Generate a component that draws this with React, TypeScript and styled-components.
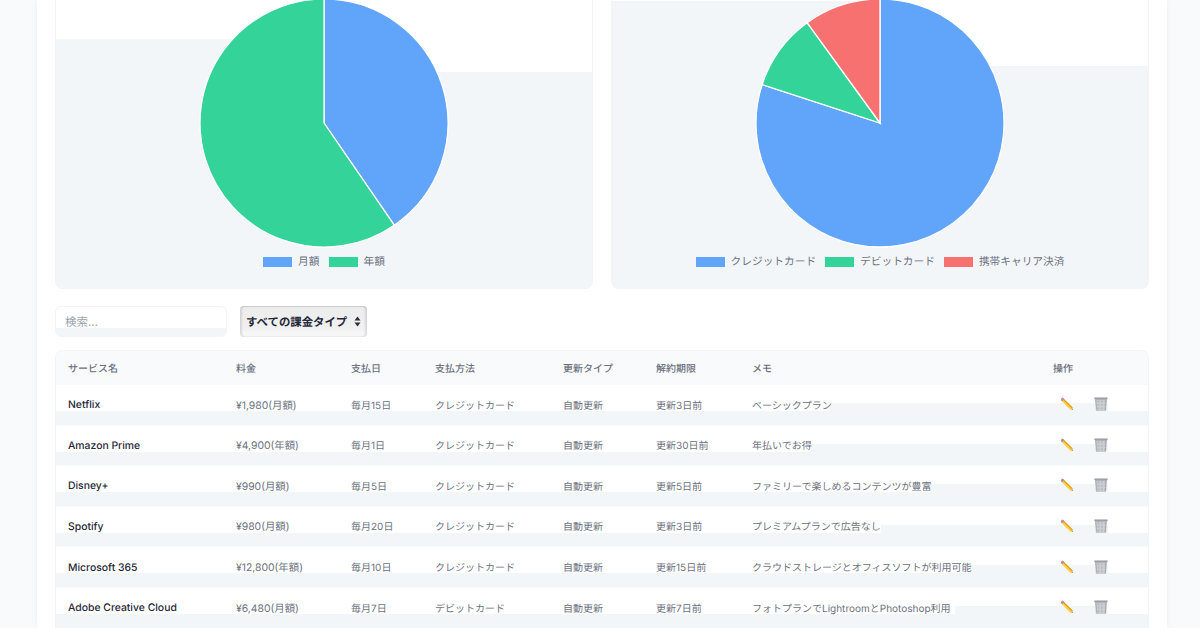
import React from 'react'
import styled, { createGlobalStyle } from 'styled-components'

const white = 'linear-gradient(#fff, #fff)'

const Global = createGlobalStyle`
    html, body {
        margin: 0;
        padding: 0;
        height: 628px;
        overflow: hidden;
        background: #f9fafb;
        font-family: Inter, "Noto Sans CJK JP", sans-serif;
        text-rendering: geometricPrecision;
    }
`

const Page = styled.div`
    height: 628px;
    padding-left: 37px;
    overflow: hidden;
`

const Main = styled.main`
    box-sizing: border-box;
    width: 1130px;
    height: 628px;
    padding: 0 18px;
    background: #fff;
    box-shadow: 0 0 6px rgba(0, 0, 0, 0.06);
    overflow: hidden;
`

const Charts = styled.section`
    display: grid;
    grid-template-columns: 538px 538px;
    gap: 18px;
`

const ChartCard = styled.div<{ $left: number; $right: number }>`
    box-sizing: border-box;
    height: 289px;
    display: flex;
    flex-direction: column;
    align-items: center;
    border: 1px solid #f3f4f6;
    border-top: none;
    border-radius: 0 0 8px 8px;
    background:
        ${white} 0 0 / 50% ${p => p.$left}px no-repeat,
        ${white} 100% 0 / 50% ${p => p.$right}px no-repeat,
        #f3f6f9;
`

const PieSvg = styled.svg`
    display: block;
    flex: none;
    width: 252px;
    height: 252px;
    margin-top: -3px;
`

const Legend = styled.div`
    display: flex;
    align-items: center;
    gap: 9px;
    margin-top: 7px;
    height: 12px;
`

const LegendItem = styled.div`
    display: flex;
    align-items: center;
    gap: 6px;
    font-size: 10.7px;
    line-height: 12px;
    color: #6b7280;
`

const Swatch = styled.span<{ $color: string }>`
    width: 29px;
    height: 10px;
    background: ${p => p.$color};
`

const Toolbar = styled.div`
    display: flex;
    gap: 13px;
    margin-top: 17px;
`

const SearchBox = styled.div`
    box-sizing: border-box;
    width: 172px;
    height: 31px;
    padding: 9px 9px 0;
    border: 1px solid #f3f4f6;
    border-radius: 6px;
    font-size: 11.5px;
    line-height: 13px;
    color: #9ca3af;
    background: ${white} 0 0 / 100% 21px no-repeat, #f3f6f9;
`

const SelectBox = styled.div`
    box-sizing: border-box;
    width: 127px;
    height: 31px;
    padding-left: 6px;
    display: flex;
    align-items: center;
    gap: 7px;
    border-radius: 4px;
    font-size: 11.4px;
    font-weight: 700;
    color: #1f2937;
    background: linear-gradient(#ececec, #f0f0f0 70%, #fafafa);
    box-shadow: inset 2px 0 2px rgba(0, 0, 0, 0.1), inset -2px 0 2px rgba(0, 0, 0, 0.1), inset 0 1px 1px rgba(0, 0, 0, 0.08);
`

const TableCard = styled.div`
    margin-top: 13px;
    border: 1px solid #f3f4f6;
    border-bottom: none;
    border-radius: 8px 8px 0 0;
    overflow: hidden;
`

const columns = '168px 115px 84px 128px 93px 96px 301px 1fr'

const HeaderRow = styled.div`
    box-sizing: border-box;
    display: grid;
    grid-template-columns: ${columns};
    align-items: center;
    height: 34px;
    padding: 0 0 1.5px 12px;
    background: #f9fafb;
    font-size: 10px;
    font-weight: 500;
    color: #6b7280;
`

// the white band drops lower up to the end of the memo text and right of the trash icon
const Row = styled.div<{ $split: number }>`
    box-sizing: border-box;
    display: grid;
    grid-template-columns: ${columns};
    align-items: center;
    height: 40.6px;
    padding-left: 12px;
    border-bottom: 1.4px solid #fafbfc;
    font-size: 10px;
    color: #6b7280;
    background:
        ${white} 0 0 / ${p => p.$split}px 26.2px no-repeat,
        ${white} 100% 0 / 40px 26.2px no-repeat,
        ${white} 0 0 / 100% 18px no-repeat,
        #f3f6f9;
`

const NameCell = styled.div`
    font-size: 10.4px;
    font-weight: 500;
    color: #1f2937;
`

const HeadCell = styled.div`
    white-space: nowrap;
`

const Cell = styled.div`
    margin-top: -1.5px;
    white-space: nowrap;
`

const PriceCell = styled(Cell)`
    font-size: 10.4px;
`

const Actions = styled.div`
    display: flex;
    align-items: center;
    gap: 20px;
    margin-top: -1px;
    padding-left: 7px;
`

const polar = (cx: number, cy: number, r: number, deg: number) => {
    const a = (deg * Math.PI) / 180
    return [cx + r * Math.sin(a), cy - r * Math.cos(a)]
}

type Slice = { color: string; from: number; to: number }

const Pie = ({ slices }: { slices: Slice[] }) => (
    <PieSvg viewBox="0 0 252 252">
        {slices.map(s => {
            const [x1, y1] = polar(126, 126, 124, s.from)
            const [x2, y2] = polar(126, 126, 124, s.to)
            const large = s.to - s.from > 180 ? 1 : 0
            return (
                <path
                    key={s.from}
                    d={`M126 126L${x1} ${y1}A124 124 0 ${large} 1 ${x2} ${y2}Z`}
                    fill={s.color}
                    stroke="#fff"
                    strokeWidth={1.3}
                />
            )
        })}
    </PieSvg>
)

const SelectArrows = () => (
    <svg width="7" height="11" viewBox="0 0 7 11">
        <path d="M3.5 0.5L6.5 4.5H0.5Z M3.5 10.5L0.5 6.5H6.5Z" fill="#27303f" />
    </svg>
)

const PencilIcon = () => (
    <svg width="14" height="14" viewBox="0 0 15 15">
        <path d="M3.6 1.6L13.4 11.2L14 14L11.2 13.4L1.6 3.8Z" fill="#f4b81c" />
        <path d="M2.6 2.7L12.4 12.3L11.2 13.4L1.6 3.8Z" fill="#fbd24a" />
        <path d="M3.6 1.6L13.4 11.2L12.9 11.8L3.1 2.1Z" fill="#d98a12" />
        <path d="M2 0.9C2.6 0.5 3.2 0.6 3.6 1.2L4.2 1.9L2 4.2L1.3 3.5C0.8 3 0.7 2.4 1.1 1.9Z" fill="#e8808a" />
        <path d="M3.7 1.4L4.7 2.4L2.5 4.6L1.5 3.6Z" fill="#9aa0a8" />
        <path d="M12.3 12.4L13.4 11.2L14 14L11.2 13.4Z" fill="#e8c9a0" />
        <path d="M13.4 13.1L14 14L13 13.8Z" fill="#4b4b4b" />
    </svg>
)

const TrashIcon = () => (
    <svg width="14" height="14" viewBox="0 0 14 14">
        <defs>
            <pattern id="mesh" width="1.4" height="1.4" patternUnits="userSpaceOnUse">
                <rect width="1.4" height="1.4" fill="#cdd0d3" />
                <rect width="0.7" height="0.7" fill="#aeb2b6" />
            </pattern>
        </defs>
        <path d="M0.8 1.4H13.2L12.1 13.2C12 13.7 11.7 14 11.2 14H2.8C2.3 14 2 13.7 1.9 13.2Z" fill="url(#mesh)" />
        <path d="M0.8 1.4H13.2L13 2.8H1Z" fill="#a6aaae" />
        <rect x="0.2" y="0.4" width="13.6" height="1.3" rx="0.6" fill="#90959a" />
        <path d="M2 2.8L2.8 13.6M12 2.8L11.2 13.6" stroke="#989ca1" strokeWidth="0.6" fill="none" />
    </svg>
)

type Subscription = {
    name: string
    price: string
    day: string
    method: string
    limit: string
    memo: string
    split: number
}

const subscriptions: Subscription[] = [
    { name: 'Netflix', price: '¥1,980(月額)', day: '毎月15日', method: 'クレジットカード', limit: '更新3日前', memo: 'ベーシックプラン', split: 774 },
    { name: 'Amazon Prime', price: '¥4,900(年額)', day: '毎月1日', method: 'クレジットカード', limit: '更新30日前', memo: '年払いでお得', split: 755 },
    { name: 'Disney+', price: '¥990(月額)', day: '毎月5日', method: 'クレジットカード', limit: '更新5日前', memo: 'ファミリーで楽しめるコンテンツが豊富', split: 874 },
    { name: 'Spotify', price: '¥980(月額)', day: '毎月20日', method: 'クレジットカード', limit: '更新3日前', memo: 'プレミアムプランで広告なし', split: 825 },
    { name: 'Microsoft 365', price: '¥12,800(年額)', day: '毎月10日', method: 'クレジットカード', limit: '更新15日前', memo: 'クラウドストレージとオフィスソフトが利用可能', split: 914 },
    { name: 'Adobe Creative Cloud', price: '¥6,480(月額)', day: '毎月7日', method: 'デビットカード', limit: '更新7日前', memo: 'フォトプランでLightroomとPhotoshop利用', split: 899 }
]

const headers = ['サービス名', '料金', '支払日', '支払方法', '更新タイプ', '解約期限', 'メモ', '操作']

export default function App() {
    return (
        <Page>
            <Global />
            <Main>
                <Charts>
                    <ChartCard $left={39} $right={72}>
                        <Pie
                            slices={[
                                { color: '#60a5fa', from: 0, to: 145.5 },
                                { color: '#34d399', from: 145.5, to: 360 }
                            ]}
                        />
                        <Legend>
                            <LegendItem><Swatch $color="#60a5fa" />月額</LegendItem>
                            <LegendItem><Swatch $color="#34d399" />年額</LegendItem>
                        </Legend>
                    </ChartCard>
                    <ChartCard $left={1} $right={66}>
                        <Pie
                            slices={[
                                { color: '#60a5fa', from: 0, to: 288 },
                                { color: '#34d399', from: 288, to: 324 },
                                { color: '#f87171', from: 324, to: 360 }
                            ]}
                        />
                        <Legend>
                            <LegendItem><Swatch $color="#60a5fa" />クレジットカード</LegendItem>
                            <LegendItem><Swatch $color="#34d399" />デビットカード</LegendItem>
                            <LegendItem><Swatch $color="#f87171" />携帯キャリア決済</LegendItem>
                        </Legend>
                    </ChartCard>
                </Charts>
                <Toolbar>
                    <SearchBox>検索...</SearchBox>
                    <SelectBox>すべての課金タイプ<SelectArrows /></SelectBox>
                </Toolbar>
                <TableCard>
                    <HeaderRow>
                        {headers.map(h => <HeadCell key={h}>{h}</HeadCell>)}
                    </HeaderRow>
                    {subscriptions.map(s => (
                        <Row key={s.name} $split={s.split}>
                            <NameCell>{s.name}</NameCell>
                            <PriceCell>{s.price}</PriceCell>
                            <Cell>{s.day}</Cell>
                            <Cell>{s.method}</Cell>
                            <Cell>自動更新</Cell>
                            <Cell>{s.limit}</Cell>
                            <Cell>{s.memo}</Cell>
                            <Actions>
                                <PencilIcon />
                                <TrashIcon />
                            </Actions>
                        </Row>
                    ))}
                </TableCard>
            </Main>
        </Page>
    )
}
